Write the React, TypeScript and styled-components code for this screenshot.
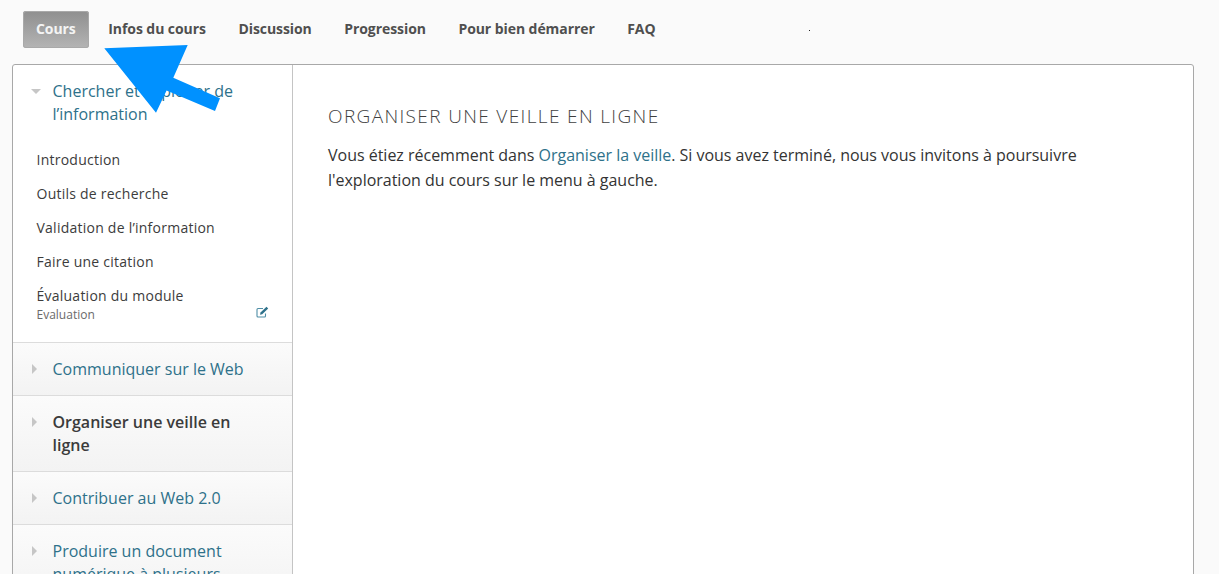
import styled, { createGlobalStyle } from 'styled-components'

const GlobalStyle = createGlobalStyle`
  html, body {
    margin: 0;
    height: 574px;
    overflow: hidden;
    background: #fafafa;
    font-family: "Open Sans", sans-serif;
  }
`

const Page = styled.div`
  position: relative;
  width: 1219px;
  height: 574px;
  overflow: hidden;
  background: #fafafa;
`

const Tabs = styled.nav`
  display: flex;
  align-items: flex-start;
  height: 64px;
  padding: 11px 0 0 23px;
  box-sizing: border-box;
`

const Tab = styled.a<{ $active?: boolean }>`
  display: block;
  height: 37px;
  line-height: 36px;
  padding: 0 13px;
  margin-right: 6.5px;
  border-radius: 3px;
  font-size: 14px;
  font-weight: 700;
  letter-spacing: -0.07px;
  color: ${p => (p.$active ? '#f4f4f4' : '#4f4f4f')};
  background: ${p => (p.$active ? 'linear-gradient(#8f8f8f, #b4b4b4)' : 'transparent')};
  box-shadow: ${p => (p.$active ? 'inset 0 0 0 1px #a9a9a9' : 'none')};
`

const Dot = styled.span`
  position: absolute;
  left: 809px;
  top: 30px;
  width: 1px;
  height: 1px;
  background: #222;
`

const Card = styled.div`
  display: flex;
  width: 1182px;
  height: 520px;
  margin-left: 12px;
  box-sizing: border-box;
  background: #fff;
  border: 1px solid #a8a8a8;
  border-radius: 3px 3px 0 0;
`

const Sidebar = styled.aside`
  flex: 0 0 280px;
  box-sizing: border-box;
  border-right: 1px solid #c4c4c4;
`

const Section = styled.div<{ $open?: boolean }>`
  position: relative;
  padding: 15px 40px 14px 39.5px;
  font-size: 16px;
  line-height: 23px;
  border-bottom: 1px solid #dcdcdc;
  background: ${p => (p.$open ? 'transparent' : 'linear-gradient(#fbfbfb, #f3f3f3)')};
`

const SectionTitle = styled.div<{ $current?: boolean }>`
  color: ${p => (p.$current ? '#3b3b3b' : '#2e718a')};
  font-weight: ${p => (p.$current ? 600 : 400)};
`

const Caret = styled.span<{ $open?: boolean }>`
  position: absolute;
  left: ${p => (p.$open ? '18px' : '19px')};
  top: ${p => (p.$open ? '24px' : '21px')};
  width: 0;
  height: 0;
  ${p =>
    p.$open
      ? `border-left: 5px solid transparent;
         border-right: 5px solid transparent;
         border-top: 5px solid #c6c6c6;`
      : `border-top: 5px solid transparent;
         border-bottom: 5px solid transparent;
         border-left: 5px solid #c6c6c6;`}
`

const Lessons = styled.ul`
  list-style: none;
  margin: 0;
  padding: 24px 0 0;
`

const Lesson = styled.li`
  position: relative;
  margin-left: -16px;
  height: 34px;
  font-size: 14px;
  line-height: 20px;
  letter-spacing: 0.24px;
  color: #3c3c3c;

  &:last-child {
    height: 42px;
  }
`

const LessonSub = styled.div`
  font-size: 12px;
  line-height: 17px;
  letter-spacing: 0;
  color: #6a6a6a;
`

const EditIcon = styled.svg`
  position: absolute;
  right: -17px;
  top: 20px;
`

const Main = styled.main`
  flex: 1;
  padding: 39px 35px;
`

const Heading = styled.h1`
  margin: 0 0 14px;
  font-size: 19px;
  font-weight: 300;
  line-height: 25px;
  letter-spacing: 1.36px;
  color: #3f3f3f;
  text-transform: uppercase;
`

const Body = styled.p`
  margin: 0;
  width: 790px;
  font-size: 16px;
  line-height: 25px;
  letter-spacing: -0.012px;
  color: #333;
`

const Link = styled.a`
  color: #2e718a;
`

const Arrow = styled.svg`
  position: absolute;
  left: 0;
  top: 0;
  pointer-events: none;
`

const tabs = ['Infos du cours', 'Discussion', 'Progression', 'Pour bien démarrer', 'FAQ']

export default function App() {
  return (
    <Page>
      <GlobalStyle />
      <Tabs>
        <Tab $active>Cours</Tab>
        {tabs.map(t => (
          <Tab key={t}>{t}</Tab>
        ))}
      </Tabs>
      <Dot />
      <Card>
        <Sidebar>
          <Section $open>
            <Caret $open />
            <SectionTitle>Chercher et exploiter de l’information</SectionTitle>
            <Lessons>
              <Lesson>Introduction</Lesson>
              <Lesson>Outils de recherche</Lesson>
              <Lesson>Validation de l’information</Lesson>
              <Lesson>Faire une citation</Lesson>
              <Lesson>
                Évaluation du module
                <LessonSub>Evaluation</LessonSub>
                <EditIcon width="13" height="12" viewBox="0 0 13 12" fill="none">
                  <path d="M7 2.500H2a1 1 0 0 0-1 1v6.500a1 1 0 0 0 1 1h6.500a1 1 0 0 0 1-1V7.500" stroke="#4f8ea6" strokeWidth="1.100" />
                  <path d="M4.500 6.500 10.500.8l1.700 1.700-6 5.700-2.200.5z" fill="#2e718a" />
                </EditIcon>
              </Lesson>
            </Lessons>
          </Section>
          <Section>
            <Caret />
            <SectionTitle>Communiquer sur le Web</SectionTitle>
          </Section>
          <Section>
            <Caret />
            <SectionTitle $current>Organiser une veille en ligne</SectionTitle>
          </Section>
          <Section>
            <Caret />
            <SectionTitle>Contribuer au Web 2.0</SectionTitle>
          </Section>
          <Section>
            <Caret />
            <SectionTitle>Produire un document numérique à plusieurs</SectionTitle>
          </Section>
        </Sidebar>
        <Main>
          <Heading>Organiser une veille en ligne</Heading>
          <Body>
            Vous étiez récemment dans <Link>Organiser la veille</Link>. Si vous avez terminé, nous vous invitons à
            poursuivre l'exploration du cours sur le menu à gauche.
          </Body>
        </Main>
      </Card>
      <Arrow width="1219" height="574" viewBox="0 0 1219 574">
        <path d="M104.300 48.300 187.700 45 173.300 77.700 220 98.300 215 111 166.600 90.400 156 112.700z" fill="#0091ff" />
      </Arrow>
    </Page>
  )
}
